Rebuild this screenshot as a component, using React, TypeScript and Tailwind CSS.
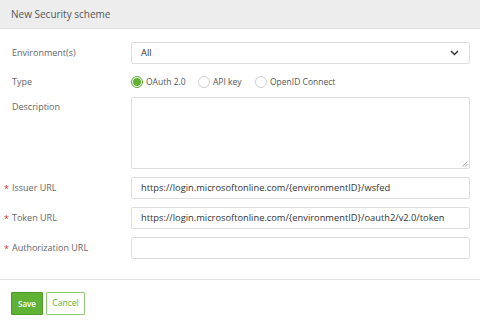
import React from "react";

function Radio({ checked, label }: { checked?: boolean; label: string }) {
  return (
    <div className="flex items-center gap-[3px]">
      {checked ? (
        <span className="flex h-[12px] w-[12px] items-center justify-center rounded-full border border-[#5aab2c] bg-white">
          <span className="h-[8px] w-[8px] rounded-full bg-[#5fb234]" />
        </span>
      ) : (
        <span className="h-[12px] w-[12px] rounded-full border border-[#cfcfcf] bg-white" />
      )}
      <span className="text-[8.5px] text-[#555]">{label}</span>
    </div>
  );
}

function Label({ text, required }: { text: string; required?: boolean }) {
  return (
    <div className="flex w-[127px] shrink-0 items-center">
      <span className="w-[8px] text-[9px] leading-none text-[#d0312d]">{required ? "*" : ""}</span>
      <span className="text-[9px] text-[#666]">{text}</span>
    </div>
  );
}

function Input({ value }: { value?: string }) {
  return (
    <div className="flex h-[22px] w-[339px] items-center rounded-[2px] border border-[#dedede] bg-white px-[9px] text-[9.3px] text-[#333]">
      {value}
    </div>
  );
}

export default function App() {
  return (
    <div
      className="h-[329px] w-[480px] overflow-hidden bg-white"
      style={{ fontFamily: '"Open Sans", "Noto Sans", sans-serif' }}
    >
      <div className="flex h-[29px] items-center border-b border-[#e0e0e0] bg-[#ededed] px-[11px] text-[10px] text-[#555]">
        New Security scheme
      </div>

      <div className="pl-[4px] pt-[13px]">
        <div className="flex items-center">
          <Label text="Environment(s)" />
          <div className="flex h-[22px] w-[339px] items-center justify-between rounded-[2px] border border-[#dedede] bg-white px-[9px] text-[9.3px] text-[#333]">
            <span>All</span>
            <svg width="9" height="6" viewBox="0 0 9 6" className="mr-[1px]">
              <path d="M1 1l3.5 3.5L8 1" fill="none" stroke="#333" strokeWidth="1.5" />
            </svg>
          </div>
        </div>

        <div className="mt-[12px] flex h-[12px] items-center">
          <Label text="Type" />
          <div className="flex items-center">
            <div className="w-[67px]">
              <Radio checked label="OAuth 2.0" />
            </div>
            <div className="w-[57px]">
              <Radio label="API key" />
            </div>
            <Radio label="OpenID Connect" />
          </div>
        </div>

        <div className="mt-[9px] flex items-start">
          <div className="pt-[3px]">
            <Label text="Description" />
          </div>
          <div className="relative h-[72px] w-[339px] rounded-[2px] border border-[#dedede] bg-white">
            <svg width="6" height="6" viewBox="0 0 6 6" className="absolute bottom-[1px] right-[1px]">
              <path d="M5.5 0.5L0.5 5.5M5.5 3L3 5.5" stroke="#999" strokeWidth="0.8" />
            </svg>
          </div>
        </div>

        <div className="mt-[8px] flex items-center">
          <Label text="Issuer URL" required />
          <Input value="https://login.microsoftonline.com/{environmentID}/wsfed" />
        </div>
        <div className="mt-[8px] flex items-center">
          <Label text="Token URL" required />
          <Input value="https://login.microsoftonline.com/{environmentID}/oauth2/v2.0/token" />
        </div>
        <div className="mt-[8px] flex items-center">
          <Label text="Authorization URL" required />
          <Input />
        </div>
      </div>

      <div className="mt-[20px] border-t border-[#e3e3e3] px-[11px] pt-[12px]">
        <div className="flex gap-[3px]">
          <button className="flex h-[23px] w-[32px] items-center justify-center rounded-[1px] border border-[#4f9a28] bg-[#5fb234] text-[8px] font-semibold text-white">
            Save
          </button>
          <button className="flex h-[23px] w-[39px] items-center justify-center rounded-[1px] border border-[#8fcc6e] bg-white text-[8.5px] text-[#5fb234]">
            Cancel
          </button>
        </div>
      </div>
    </div>
  );
}
